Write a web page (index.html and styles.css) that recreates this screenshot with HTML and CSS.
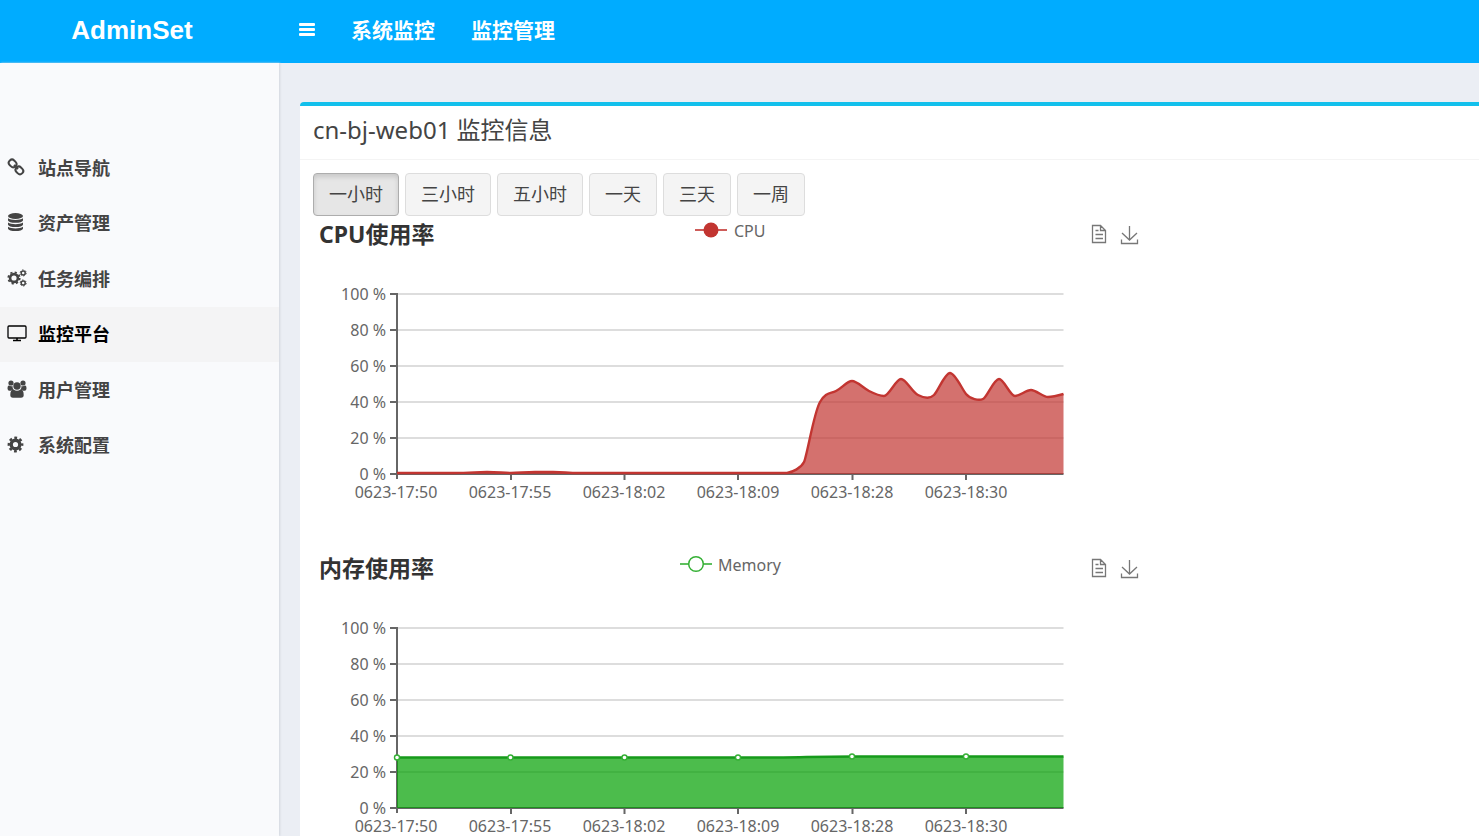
FILE: index.html
```html
<!DOCTYPE html>
<html lang="zh-CN">
<head>
<meta charset="utf-8">
<title>AdminSet</title>
<link rel="stylesheet" href="styles.css">
</head>
<body>
<header class="topbar">
  <a class="logo" href="#">AdminSet</a>
  <nav class="topnav">
    <button class="toggle" type="button" aria-label="菜单">
      <svg width="16" height="14" viewBox="0 0 16 14" fill="currentColor"><rect width="16" height="3" rx="1"/><rect y="5" width="16" height="3" rx="1"/><rect y="10" width="16" height="3" rx="1"/></svg>
    </button>
    <a href="#">系统监控</a>
    <a href="#">监控管理</a>
  </nav>
</header>
<div class="layout">
  <aside class="sidebar">
    <nav class="menu">
      <a href="#"><svg class="icon" viewBox="0 0 20 20" fill="none" stroke="currentColor" stroke-width="2"><rect x="1.600" y="3.200" width="8" height="6.400" rx="3" transform="rotate(45 5.600 6.400)"/><rect x="8.400" y="10.200" width="8" height="6.400" rx="3" transform="rotate(45 12.400 13.400)"/><path d="M7 8l4 4"/></svg>站点导航</a>
      <a href="#"><svg class="icon" viewBox="0 0 20 20" fill="currentColor"><ellipse cx="8.500" cy="4" rx="7.500" ry="3"/><path d="M1 6.300c3 2.300 12 2.300 15 0v1.900c0 3.400-15 3.400-15 0zM1 10.600c3 2.300 12 2.300 15 0v1.900c0 3.400-15 3.400-15 0zM1 14.800c3 2.300 12 2.300 15 0v1.700c0 3.400-15 3.400-15 0z"/></svg>资产管理</a>
      <a href="#"><svg class="icon" viewBox="0 0 20 20" fill="none" stroke="currentColor"><circle cx="7" cy="10" r="3.900" stroke-width="2.600"/><circle cx="7" cy="10" r="5.700" stroke-width="1.800" stroke-dasharray="2.200 2.277"/><circle cx="16.200" cy="4.900" r="2" stroke-width="1.500"/><circle cx="16.200" cy="4.900" r="3" stroke-width="1" stroke-dasharray="1.500 1.642"/><circle cx="16.200" cy="15" r="2" stroke-width="1.500"/><circle cx="16.200" cy="15" r="3" stroke-width="1" stroke-dasharray="1.500 1.642"/></svg>任务编排</a>
      <a class="active" href="#"><svg class="icon" viewBox="0 0 20 20" fill="none" stroke="currentColor"><rect x="1" y="3" width="18" height="12" rx="1" stroke-width="1.300"/><path d="M10 15v2M6 17.500h8" stroke-width="1.500"/></svg>监控平台</a>
      <a href="#"><svg class="icon" viewBox="0 0 20 20" fill="currentColor"><circle cx="4" cy="4" r="2.600"/><circle cx="16" cy="4" r="2.600"/><circle cx="10" cy="7" r="3.700"/><path d="M.5 9.500q0-3 1.500-3 2 1.200 3.500.5-.1 2.500 1 3.500-2 0-2.500 1.200H2.500Q.5 11.700.5 9.500zM19.500 9.500q0-3-1.500-3-2 1.200-3.500.5.1 2.500-1 3.500 2 0 2.500 1.200h1.500q2 0 2-2.200zM3.300 16q0-5.500 3.200-5.500 3.500 2.500 7 0 3.200 0 3.200 5.500 0 2.700-2.700 2.700H6q-2.700 0-2.700-2.700z"/></svg>用户管理</a>
      <a href="#"><svg class="icon" viewBox="0 0 20 20" fill="none" stroke="currentColor"><circle cx="8.500" cy="10.500" r="4.300" stroke-width="3.400"/><circle cx="8.500" cy="10.500" r="6.700" stroke-width="2.400" stroke-dasharray="2.800 2.462" stroke-dashoffset="1.400"/></svg>系统配置</a>
    </nav>
  </aside>
  <main class="content">
    <section class="box">
      <h1 class="box-title">cn-bj-web01 监控信息</h1>
      <div class="box-body">
        <div class="ranges">
          <button class="btn pressed" type="button">一小时</button>
          <button class="btn" type="button">三小时</button>
          <button class="btn" type="button">五小时</button>
          <button class="btn" type="button">一天</button>
          <button class="btn" type="button">三天</button>
          <button class="btn" type="button">一周</button>
        </div>
        <svg class="chart" width="834" height="334" viewBox="0 0 834 334" role="img" aria-label="CPU使用率">
          <defs>
            <g id="tools" fill="none" stroke="#777" stroke-width="1.300">
              <path d="M779.500 9.500h8l5 5v12h-13zM787.500 9.500v5h5M782.500 14.500h3M782.500 18.500h7.500M782.500 22.500h7.500"/>
              <path d="M816.500 10v14M809 17l7.500 7 7.500-7M808.500 23.500v4h16v-4"/>
            </g>
            <path id="grid" class="grid" d="M84 78h666.500M84 114h666.500M84 150h666.500M84 186h666.500M84 222h666.500"/>
            <path id="axis" class="axis" d="M84 77v186M77 258h673.500M77 78h7M77 114h7M77 150h7M77 186h7M77 222h7M198 258v6M311.500 258v6M425 258v6M539.500 258v6M653 258v6"/>
            <g id="labels">
              <g text-anchor="end"><text x="73" y="84">100 %</text><text x="73" y="120">80 %</text><text x="73" y="156">60 %</text><text x="73" y="192">40 %</text><text x="73" y="228">20 %</text><text x="73" y="264">0 %</text></g>
              <g text-anchor="middle"><text x="83" y="282">0623-17:50</text><text x="197" y="282">0623-17:55</text><text x="311" y="282">0623-18:02</text><text x="425" y="282">0623-18:09</text><text x="539" y="282">0623-18:28</text><text x="653" y="282">0623-18:30</text></g>
            </g>
          </defs>
          <text class="chart-title" x="6" y="27">CPU使用率</text>
          <path d="M382 14h32" stroke="#c23531" stroke-width="1.600"/><circle cx="398" cy="14" r="7.500" fill="#c23531"/>
          <text x="421" y="21">CPU</text>
          <use href="#tools"/><use href="#grid"/><use href="#axis"/>
          <path fill="#c23531" fill-opacity=".7" d="M84 257H474C480 256 488 252 491 246S501 196 507 186S517 178 523 175S534 165 539 165S550 172 556 175S566 180 571 180S583 163 588 163S599 176 605 179S617 183 621 179S632 157 637 157S649 173 653 178S666 185 670 183S681 163 686 163S697 180 702 180S713 174 718 174S730 181 735 181S747 179 750.500 178V258H84z"/>
          <path fill="none" stroke="#c23531" stroke-width="2.400" d="M84 257H140C158 257 163 256 174 256S190 257 198 257S212 256 222 256H240C250 256 255 257 266 257H474C480 256 488 252 491 246S501 196 507 186S517 178 523 175S534 165 539 165S550 172 556 175S566 180 571 180S583 163 588 163S599 176 605 179S617 183 621 179S632 157 637 157S649 173 653 178S666 185 670 183S681 163 686 163S697 180 702 180S713 174 718 174S730 181 735 181S747 179 750.500 178"/>
          <use href="#labels"/>
        </svg>
        <svg class="chart" width="834" height="334" viewBox="0 0 834 334" role="img" aria-label="内存使用率">
          <text class="chart-title" x="6" y="27">内存使用率</text>
          <path d="M367 14h32" stroke="#35b035" stroke-width="1.600"/><circle cx="383" cy="14" r="7.300" fill="#fff" stroke="#35b035" stroke-width="1.500"/>
          <text x="405" y="21">Memory</text>
          <use href="#tools"/><use href="#grid"/><use href="#axis"/>
          <path fill="#00a000" fill-opacity=".7" d="M84 207.500H470C500 207 510 206.500 540 206.500H750.500V258H84z"/>
          <path fill="none" stroke="#169a1b" stroke-width="2.400" d="M84 207.500H470C500 207 510 206.500 540 206.500H750.500"/>
          <g fill="#fff" stroke="#35b035" stroke-width="1.400"><circle cx="84" cy="207.500" r="2.500"/><circle cx="197.500" cy="207.500" r="2.500"/><circle cx="311.500" cy="207.500" r="2.500"/><circle cx="425" cy="207.500" r="2.500"/><circle cx="539" cy="206.500" r="2.500"/><circle cx="653" cy="206.500" r="2.500"/></g>
          <use href="#labels"/>
        </svg>
      </div>
    </section>
  </main>
</div>
</body>
</html>
```
FILE: styles.css
```css
* { box-sizing: border-box; }

body {
  margin: 0;
  height: 100vh;
  overflow: hidden;
  display: flex;
  flex-direction: column;
  background: #ebeef4;
  color: #444;
  font-family: "Noto Sans", "Noto Sans CJK SC", sans-serif;
}

a { color: inherit; text-decoration: none; }

.topbar {
  flex: none;
  display: flex;
  align-items: center;
  height: 63px;
  padding-bottom: 3px;
  background: #00acff;
  color: #fff;
  font-weight: bold;
}

.logo {
  width: 264px;
  text-align: center;
  font-family: "Liberation Sans", Arial, sans-serif;
  font-size: 26px;
}

.topnav {
  display: flex;
  align-items: center;
  gap: 36px;
  padding-left: 35px;
  font-size: 21px;
}

.topnav a { padding-bottom: 2px; }

.toggle {
  display: flex;
  padding: 0;
  border: 0;
  background: none;
  color: inherit;
}

.layout { flex: 1; min-height: 0; display: flex; }

.sidebar {
  flex: none;
  width: 279px;
  padding-top: 77px;
  background: #f9fafc;
  box-shadow: 1px 0 2px #d2d6de;
}

.menu { display: grid; grid-auto-rows: 1fr; min-height: 333px; }

.menu a {
  display: flex;
  align-items: center;
  gap: 11px;
  padding: 0 0 2px 7px;
  font-size: 18px;
  font-weight: bold;
}

.menu .active { background: #f4f4f5; color: #000; }

.icon { width: 20px; height: 20px; }

.content { flex: 1; min-width: 0; padding: 39px 0 0 21px; }

.box {
  border-top: 4px solid #12c0ec;
  border-top-left-radius: 4px;
  background: #fff;
}

.box-title {
  margin: 0;
  padding: 8px 13px 13px;
  border-bottom: 1px solid #f4f4f4;
  font-size: 24px;
  line-height: 32px;
  font-weight: normal;
}

.box-body { padding: 13px; }

.ranges { display: flex; gap: 6px; }

.btn {
  height: 43px;
  padding: 0 15px 4px;
  border: 1px solid #ddd;
  border-radius: 4px;
  background: #f4f4f4;
  color: #444;
  font: inherit;
  font-size: 18px;
}

.pressed {
  border-color: #adadad;
  background: #e6e6e6;
  box-shadow: inset 0 3px 5px rgba(0, 0, 0, 0.13);
}

.chart { display: block; font-size: 16px; fill: #666; }
.chart-title { font-size: 23px; font-weight: bold; fill: #333; }
.grid { fill: none; stroke: #ddd; stroke-width: 2; }
.axis { fill: none; stroke: #666; stroke-width: 2; }
```
